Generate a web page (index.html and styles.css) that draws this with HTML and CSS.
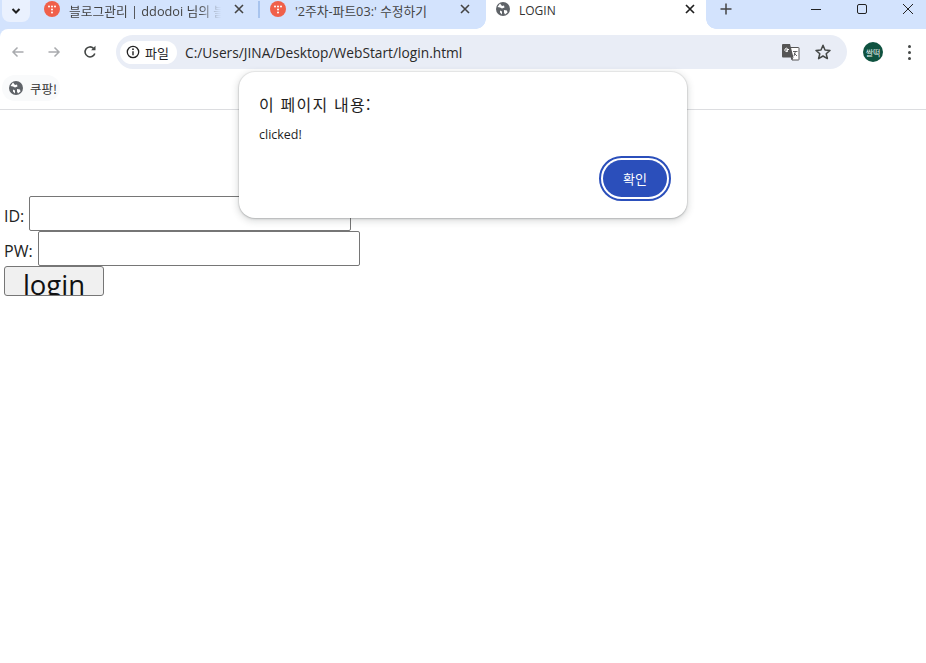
FILE: index.html
```html
<!DOCTYPE html>
<html lang="ko">
<head>
<meta charset="utf-8">
<title>LOGIN</title>
<link rel="stylesheet" href="styles.css">
</head>
<body>
<div class="chrome">
  <div class="tabstrip">
    <div class="tabsearch"><svg width="12" height="12" viewBox="0 0 12 12"><path d="M2.500 4l3.500 3.500L9.500 4" fill="none" stroke="#1f1f1f" stroke-width="2"/></svg></div>
    <div class="tab tab-one">
      <span class="tfav"><svg width="16" height="16" viewBox="0 0 16 16"><circle cx="8" cy="8" r="8" fill="#f0604a"/><g fill="#fff"><circle cx="5" cy="5.500" r="1"/><circle cx="8" cy="5.500" r="1"/><circle cx="11" cy="5.500" r="1"/><circle cx="8" cy="8.500" r="1"/><circle cx="8" cy="11.500" r="1"/></g></svg></span>
      <span class="tlabel fade">블로그관리 | ddodoi 님의 블로그</span>
      <span class="tclose"><svg width="10" height="10" viewBox="0 0 10 10"><path d="M1 1l8 8M9 1l-8 8" stroke="#444" stroke-width="1.600"/></svg></span>
    </div>
    <div class="tabsep"></div>
    <div class="tab tab-two">
      <span class="tfav"><svg width="16" height="16" viewBox="0 0 16 16"><circle cx="8" cy="8" r="8" fill="#f0604a"/><g fill="#fff"><circle cx="5" cy="5.500" r="1"/><circle cx="8" cy="5.500" r="1"/><circle cx="11" cy="5.500" r="1"/><circle cx="8" cy="8.500" r="1"/><circle cx="8" cy="11.500" r="1"/></g></svg></span>
      <span class="tlabel">'2주차-파트03:' 수정하기</span>
      <span class="tclose"><svg width="10" height="10" viewBox="0 0 10 10"><path d="M1 1l8 8M9 1l-8 8" stroke="#444" stroke-width="1.600"/></svg></span>
    </div>
    <div class="tab tab-active">
      <span class="tfav"><svg width="14" height="14" viewBox="0 0 14 14"><circle cx="7" cy="7" r="7" fill="#5f6368"/><path d="M4 1.500l2 2.500 2-.500 .5 2-2.500 1-2-1-2.500-.500zM8 8l3 .5 .5 2-2.500 2-1-2zM4 8.500l2 1v3l-2-2z" fill="#fff"/></svg></span>
      <span class="tlabel active-label">LOGIN</span>
      <span class="tclose"><svg width="10" height="10" viewBox="0 0 10 10"><path d="M1 1l8 8M9 1l-8 8" stroke="#1f1f1f" stroke-width="1.700"/></svg></span>
    </div>
    <div class="newtab"><svg width="12" height="12" viewBox="0 0 12 12"><path d="M6 .5v11M.5 6h11" stroke="#444" stroke-width="1.500"/></svg></div>
    <div class="winctl">
      <span class="winbtn"><svg width="12" height="12" viewBox="0 0 12 12"><path d="M1 6.500h10" stroke="#222" stroke-width="1"/></svg></span>
      <span class="winbtn"><svg width="12" height="12" viewBox="0 0 12 12"><rect x="1.500" y="1.500" width="9" height="9" rx="1.500" fill="none" stroke="#222" stroke-width="1"/></svg></span>
      <span class="winbtn"><svg width="12" height="12" viewBox="0 0 12 12"><path d="M1 1l10 10M11 1l-10 10" stroke="#222" stroke-width="1"/></svg></span>
    </div>
  </div>
  <div class="toolbar">
    <span class="navbtn"><svg width="16" height="16" viewBox="0 0 16 16"><path d="M13.500 8H3M7.500 3.500L3 8l4.500 4.500" fill="none" stroke="#a9abae" stroke-width="1.500"/></svg></span>
    <span class="navbtn"><svg width="16" height="16" viewBox="0 0 16 16"><path d="M2.500 8H13M8.500 3.500L13 8l-4.500 4.500" fill="none" stroke="#a9abae" stroke-width="1.500"/></svg></span>
    <span class="navbtn"><svg width="16" height="16" viewBox="0 0 16 16"><path d="M12.800 9.500A5 5 0 1 1 11.500 4.300" fill="none" stroke="#444746" stroke-width="1.600"/><path d="M13.500 1.800v4.400H9.100z" fill="#444746"/></svg></span>
    <div class="omnibox">
      <div class="chip">
        <svg width="14" height="14" viewBox="0 0 14 14"><circle cx="7" cy="7" r="5.700" fill="none" stroke="#222" stroke-width="1.300"/><path d="M7 6.200v4" stroke="#222" stroke-width="1.400"/><circle cx="7" cy="4.200" r=".9" fill="#222"/></svg>
        <span>파일</span>
      </div>
      <span class="url">C:/Users/JINA/Desktop/WebStart/login.html</span>
      <span class="omni-ico"><svg width="18" height="18" viewBox="0 0 18 18"><path d="M8 4.500h8.500a.5.500 0 0 1 .5.500v11.500a.5.500 0 0 1-.5.500H10z" fill="#fff" stroke="#555" stroke-width="1"/><path d="M1 1h7l3.500 13.500H1a1 1 0 0 1-1-1V2a1 1 0 0 1 1-1z" fill="#555"/><path d="M7 6.500H4.800v1.300H6a1.700 1.700 0 1 1-.5-2.300" fill="none" stroke="#fff" stroke-width="1"/><path d="M11 8.500h4.500M13.500 8l-1.500 5M12 10l3 3" stroke="#555" stroke-width=".9" fill="none"/><path d="M8.500 14.500l1.500 2.500 1.500-2.500z" fill="#555"/></svg></span>
      <span class="omni-ico star"><svg width="18" height="18" viewBox="0 0 18 18"><path d="M9 2.300l2 4.700 5 .4-3.800 3.300 1.200 4.900L9 13l-4.400 2.600 1.200-4.900L2 7.400l5-.4z" fill="none" stroke="#444746" stroke-width="1.500" stroke-linejoin="round"/></svg></span>
    </div>
    <div class="avatar"><span>쌀떡</span></div>
    <div class="menu"><i></i><i></i><i></i></div>
  </div>
  <div class="bookmarks">
    <div class="bookmark">
      <svg width="14" height="14" viewBox="0 0 14 14"><circle cx="7" cy="7" r="7" fill="#5f6368"/><path d="M4 1.500l2 2.500 2-.500 .5 2-2.500 1-2-1-2.500-.500zM8 8l3 .5 .5 2-2.500 2-1-2zM4 8.500l2 1v3l-2-2z" fill="#fff"/></svg>
      <span>쿠팡!</span>
    </div>
  </div>
</div>
<main class="page">
  <form class="login">
    <div class="row"><label>ID: </label><input class="field" type="text"></div>
    <div class="row"><label>PW: </label><input class="field" type="text"></div>
    <button class="submit" type="button">login</button>
  </form>
</main>
<div class="dialog">
  <div class="dtitle">이 페이지 내용:</div>
  <div class="dmsg">clicked!</div>
  <div class="dactions"><button class="ok" type="button">확인</button></div>
</div>
</body>
</html>
```
FILE: styles.css
```css
* { box-sizing: border-box; }
html, body { margin: 0; padding: 0; }
body {
  width: 926px;
  height: 663px;
  overflow: hidden;
  background: #fff;
  font-family: "Noto Sans CJK KR", "Noto Sans", sans-serif;
  color: #1f1f1f;
  position: relative;
}
.chrome { border-bottom: 1px solid #dcdde0; background: #d3e3fd; }
.tabstrip {
  height: 29px;
  background: #d3e3fd;
  display: flex;
  align-items: flex-start;
}
.tabsearch {
  width: 28px;
  height: 22px;
  margin-left: 2px;
  background: #eaf1fe;
  border-radius: 0 0 8px 8px;
  display: flex;
  align-items: center;
  justify-content: center;
  flex: none;
}
.tab {
  height: 29px;
  display: flex;
  align-items: flex-start;
  padding-top: 1px;
  font-size: 12.750px;
  color: #444;
  position: relative;
  flex: none;
}
.tab-one { width: 228px; padding-left: 14px; }
.tab-two { width: 226px; padding-left: 10px; }
.tabsep {
  width: 2px;
  height: 17px;
  margin-top: 1px;
  background: #a8c4ee;
  flex: none;
}
.tfav { width: 16px; height: 16px; flex: none; display: flex; }
.tlabel {
  margin-left: 9px;
  width: 152px;
  height: 18px;
  line-height: 18px;
  margin-top: 1px;
  white-space: nowrap;
  overflow: hidden;
  font-family: "Open Sans", "Noto Sans CJK KR", sans-serif;
  flex: none;
}
.fade { -webkit-mask-image: linear-gradient(to right, #000 85%, transparent); mask-image: linear-gradient(to right, #000 85%, transparent); }
.tclose { margin-left: 13px; margin-top: 3px; display: flex; flex: none; }
.tab-two .tlabel { width: 153px; }
.tab-two .tclose { margin-left: 12px; }
.tab-active {
  width: 220px;
  background: #fff;
  padding-left: 10px;
  color: #333;
}
.tab-active::before,
.tab-active::after {
  content: "";
  position: absolute;
  bottom: 0;
  width: 10px;
  height: 10px;
}
.tab-active::before { left: -10px; background: radial-gradient(circle at 0 0, #d3e3fd 9.500px, #fff 10px); }
.tab-active::after { right: -10px; background: radial-gradient(circle at 100% 0, #d3e3fd 9.500px, #fff 10px); }
.tab-active .tfav { margin-top: 1px; }
.tab-active .active-label { width: 155px; font-size: 12px; margin-left: 7px; }
.tab-active .tclose { margin-left: 11px; }
.newtab { width: 12px; margin-left: 14px; margin-top: 3px; display: flex; flex: none; }
.winctl { margin-left: auto; margin-right: -5px; display: flex; width: 138px; padding-top: 3px; flex: none; }
.winbtn { width: 46px; display: flex; justify-content: center; }
.toolbar {
  height: 44px;
  background: #fff;
  border-radius: 8px 0 0 0;
  display: flex;
  align-items: center;
  padding-top: 2px;
}
.navbtn { width: 36px; display: flex; justify-content: center; flex: none; }
.omnibox {
  width: 731px;
  height: 34px;
  margin-left: 8px;
  background: #e9edf6;
  border-radius: 17px;
  display: flex;
  align-items: center;
  padding-left: 4px;
  flex: none;
}
.chip {
  width: 57px;
  height: 23px;
  background: #fff;
  border-radius: 12px;
  display: flex;
  align-items: center;
  padding-left: 6px;
  gap: 5px;
  font-size: 13px;
  flex: none;
}
.url {
  margin-left: 8px;
  font-size: 13.750px;
  font-family: "Open Sans", sans-serif;
  color: #2a2a2a;
  width: 597px;
  flex: none;
  white-space: nowrap;
}
.omni-ico { width: 18px; height: 18px; display: flex; flex: none; }
.star { margin-left: 14px; }
.avatar {
  width: 20px;
  height: 20px;
  margin-left: 16px;
  border-radius: 50%;
  background: #0f5240;
  display: flex;
  align-items: center;
  justify-content: center;
  color: #e8f0ec;
  font-size: 8px;
  flex: none;
}
.menu {
  margin-left: 25px;
  display: flex;
  flex-direction: column;
  gap: 3px;
}
.menu i { display: block; width: 3px; height: 3px; border-radius: 50%; background: #444746; }
.bookmarks {
  height: 36px;
  background: #fff;
  display: flex;
  align-items: flex-start;
  padding-left: 2px;
  padding-top: 2px;
}
.bookmark {
  width: 58px;
  height: 26px;
  border-radius: 13px;
  background: #f9fafb;
  display: flex;
  align-items: center;
  padding-left: 7px;
  gap: 7px;
  font-size: 12.500px;
  color: #333;
}
.page { padding: 86px 4px 0; background: #fff; }
.login { font-family: "Open Sans", "Noto Sans", sans-serif; font-size: 16px; color: #222; }
.row { display: flex; align-items: center; height: 35px; }
.row label { margin-right: 5px; padding-top: 4px; }
.field {
  width: 322px;
  height: 35px;
  border: 1px solid #767676;
  border-radius: 2px;
  background: #fff;
  padding: 0;
}
.submit {
  display: block;
  width: 100px;
  height: 30px;
  padding: 3px 0 0;
  background: #f0f0f0;
  border: 1px solid #767676;
  border-radius: 3px;
  font-family: "Open Sans", sans-serif;
  font-size: 27.500px;
  line-height: 30px;
  color: #111;
  overflow: hidden;
}
.dialog {
  position: absolute;
  left: 239px;
  top: 72px;
  width: 448px;
  height: 146px;
  background: #fff;
  border-radius: 16px;
  box-shadow: 0 0 0 1px rgba(60,64,67,.06), 0 1px 2px rgba(60,64,67,.25), 0 2px 6px 2px rgba(60,64,67,.15);
  padding: 21px 20px 0;
  display: flex;
  flex-direction: column;
}
.dtitle { font-size: 16px; line-height: 22px; color: #1f1f1f; letter-spacing: 1.200px; }
.dmsg { font-family: "Open Sans", sans-serif; font-size: 12.500px; line-height: 18px; margin-top: 11px; color: #1f1f1f; }
.dactions { display: flex; justify-content: flex-end; margin-top: 13px; margin-right: -3px; }
.ok {
  width: 64px;
  height: 37px;
  border-radius: 19px;
  border: 0;
  background: #2b4fbb;
  color: #fff;
  font-family: "Noto Sans CJK KR", sans-serif;
  font-size: 13px;
  outline: 2px solid #2b4fbb;
  outline-offset: 2px;
  padding: 0;
  margin: 3px;
}
```
